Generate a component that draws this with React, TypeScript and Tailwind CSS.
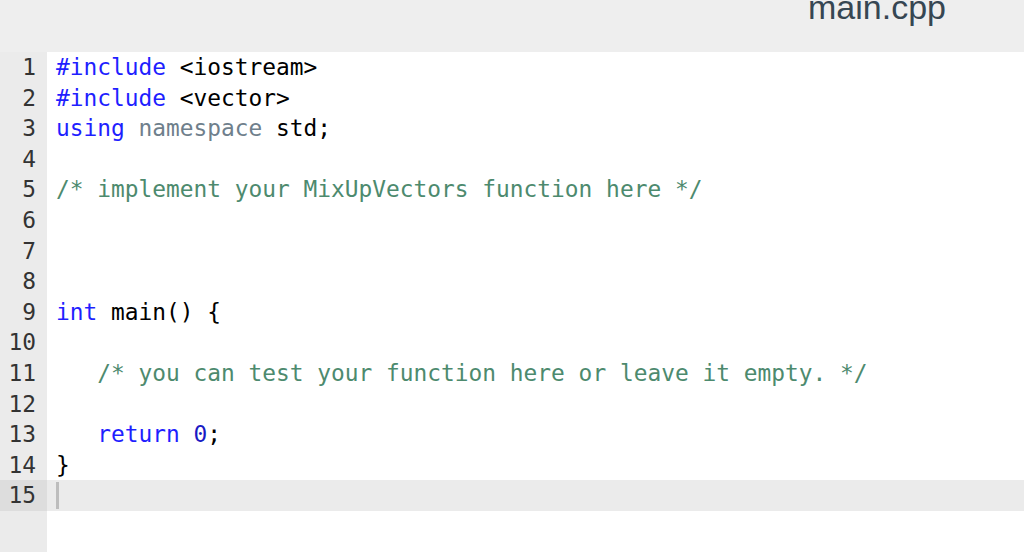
const KW = "text-[#1f1fff]";
const NS = "text-[#6f7f8c]";
const CM = "text-[#4d8a6e]";
const NUM = "text-[#1a1ac4]";

type Tok = [string, string?];

const lines: Tok[][] = [
  [["#include", KW], [" <iostream>"]],
  [["#include", KW], [" <vector>"]],
  [["using", KW], [" "], ["namespace", NS], [" std;"]],
  [],
  [["/* implement your MixUpVectors function here */", CM]],
  [],
  [],
  [],
  [["int", KW], [" main() {"]],
  [],
  [["   "], ["/* you can test your function here or leave it empty. */", CM]],
  [],
  [["   "], ["return", KW], [" "], ["0", NUM], [";"]],
  [["}"]],
  [],
];

const mono = { fontFamily: '"DejaVu Sans Mono", "Liberation Mono", monospace' };

const App = () => (
  <div className="w-[1024px] h-[552px] overflow-hidden bg-white flex flex-col">
    <header className="h-[52px] shrink-0 bg-[#eeeeee] flex justify-end pr-[78px] overflow-hidden">
      <span
        className="-mt-[10px] text-[34px] leading-none text-[#364652] h-fit"
        style={{ fontFamily: '"Liberation Sans", Arial, sans-serif' }}
      >
        main.cpp
      </span>
    </header>

    <div className="flex-1 flex text-[22.85px] leading-[30.6px] text-black" style={mono}>
      <div className="w-[47px] shrink-0 bg-[#ebebeb] text-[#333333] text-right">
        {lines.map((_, i) => (
          <div key={i} className={i === 14 ? "pr-[11px] bg-[#dddddd]" : "pr-[11px]"}>
            {i + 1}
          </div>
        ))}
      </div>
      <div className="flex-1">
        {lines.map((toks, i) => (
          <div
            key={i}
            className={
              i === 14
                ? "h-[30.6px] pl-[9px] bg-[#ebebeb] flex items-center whitespace-pre"
                : "h-[30.6px] pl-[9px] whitespace-pre"
            }
          >
            {toks.map(([t, c], j) => (
              <span key={j} className={c}>
                {t}
              </span>
            ))}
            {i === 14 && <span className="w-[3px] h-[27px] bg-[#bdbdbd]" />}
          </div>
        ))}
      </div>
    </div>
  </div>
);

export default App;
